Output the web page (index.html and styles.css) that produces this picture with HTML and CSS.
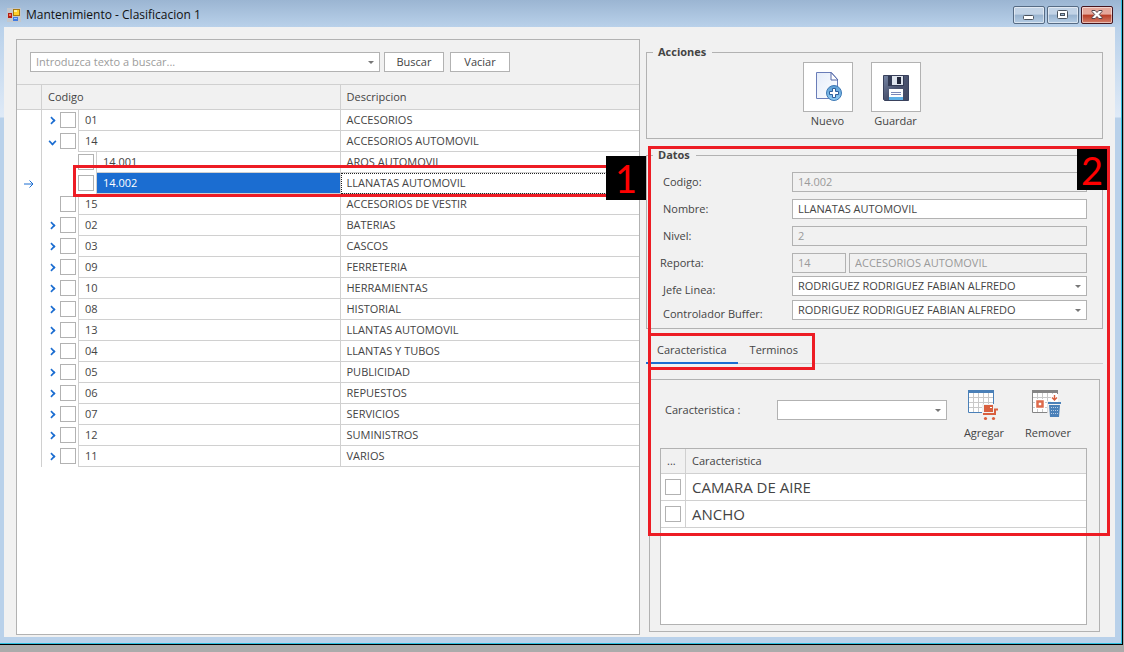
FILE: index.html
```html
<!DOCTYPE html>
<html lang="es">
<head>
<meta charset="utf-8">
<title>Mantenimiento - Clasificacion 1</title>
<link rel="stylesheet" href="styles.css">
</head>
<body>
<div class="window">
  <header class="titlebar">
    <svg class="app-icon" width="14" height="14" viewBox="0 0 14 14" aria-hidden="true">
      <rect width="14" height="14" fill="#c3c7cc"/>
      <rect x="6.500" y="1.500" width="6" height="6" fill="#ffd028" stroke="#a87a10"/>
      <rect x="7" y="2" width="3" height="2" fill="#ffee9a"/>
      <rect x="1" y="5" width="4" height="5" fill="#b51d12"/>
      <rect x="2" y="6" width="2" height="2" fill="#ec7a62"/>
      <rect x="6" y="9" width="5" height="4" fill="#3f7be0"/>
      <rect x="7" y="10" width="3" height="1" fill="#9cc4ff"/>
    </svg>
    <h1 class="title">Mantenimiento - Clasificacion 1</h1>
    <div class="controls">
      <button class="control" type="button" aria-label="Minimizar"><svg width="12" height="12" viewBox="0 0 12 12"><rect x=".5" y="6.500" width="10" height="4" rx="1" fill="#fff" stroke="#4b535e"/></svg></button>
      <button class="control" type="button" aria-label="Maximizar"><svg width="12" height="12" viewBox="0 0 12 12"><rect x=".5" y="1.500" width="10" height="8" rx="1" fill="#fff" stroke="#4b535e"/><rect x="3.500" y="4.500" width="4" height="2" fill="#9db8d3" stroke="#4b535e"/></svg></button>
      <button class="control control-close" type="button" aria-label="Cerrar"><svg width="12" height="12" viewBox="0 0 12 12"><path d="M1 1.500h3.200l1.800 2 1.800-2H11v1L8.300 5.500 11 8.500v1H7.800L6 7.500l-1.800 2H1v-1l2.700-3L1 2.500z" fill="#fff" stroke="#54434a"/></svg></button>
    </div>
  </header>

  <main class="content">
    <section class="panel tree-panel">
      <form class="search">
        <span class="combo search-combo"><input class="field" type="text" aria-label="Buscar" placeholder="Introduzca texto a buscar..."></span>
        <button class="button" type="button">Buscar</button>
        <button class="button button-second" type="button">Vaciar</button>
      </form>
      <table class="tree">
        <colgroup><col class="col-mark"><col><col></colgroup>
        <thead><tr><th></th><th>Codigo</th><th>Descripcion</th></tr></thead>
        <tbody>
          <tr><td></td><td><div class="node"><button class="toggle" type="button" aria-label="Expandir 01"></button><input class="check" type="checkbox" aria-label="01"><span class="code">01</span></div></td><td>ACCESORIOS</td></tr>
          <tr><td></td><td><div class="node"><button class="toggle open" type="button" aria-label="Contraer 14"></button><input class="check" type="checkbox" aria-label="14"><span class="code">14</span></div></td><td>ACCESORIOS AUTOMOVIL</td></tr>
          <tr><td></td><td><div class="node child"><input class="check" type="checkbox" aria-label="14.001"><span class="code">14.001</span></div></td><td>AROS AUTOMOVIL</td></tr>
          <tr class="selected"><td><svg class="row-arrow" width="10" height="10" viewBox="0 0 10 10"><path d="M0 5h9M5.500 1.500L9 5 5.500 8.500" fill="none" stroke="#1b6dd1"/></svg></td><td><div class="node child"><input class="check" type="checkbox" aria-label="14.002"><span class="code">14.002</span></div></td><td>LLANATAS AUTOMOVIL</td></tr>
          <tr><td></td><td><div class="node leaf"><input class="check" type="checkbox" aria-label="15"><span class="code">15</span></div></td><td>ACCESORIOS DE VESTIR</td></tr>
          <tr><td></td><td><div class="node"><button class="toggle" type="button" aria-label="Expandir 02"></button><input class="check" type="checkbox" aria-label="02"><span class="code">02</span></div></td><td>BATERIAS</td></tr>
          <tr><td></td><td><div class="node"><button class="toggle" type="button" aria-label="Expandir 03"></button><input class="check" type="checkbox" aria-label="03"><span class="code">03</span></div></td><td>CASCOS</td></tr>
          <tr><td></td><td><div class="node"><button class="toggle" type="button" aria-label="Expandir 09"></button><input class="check" type="checkbox" aria-label="09"><span class="code">09</span></div></td><td>FERRETERIA</td></tr>
          <tr><td></td><td><div class="node"><button class="toggle" type="button" aria-label="Expandir 10"></button><input class="check" type="checkbox" aria-label="10"><span class="code">10</span></div></td><td>HERRAMIENTAS</td></tr>
          <tr><td></td><td><div class="node"><button class="toggle" type="button" aria-label="Expandir 08"></button><input class="check" type="checkbox" aria-label="08"><span class="code">08</span></div></td><td>HISTORIAL</td></tr>
          <tr><td></td><td><div class="node"><button class="toggle" type="button" aria-label="Expandir 13"></button><input class="check" type="checkbox" aria-label="13"><span class="code">13</span></div></td><td>LLANTAS AUTOMOVIL</td></tr>
          <tr><td></td><td><div class="node"><button class="toggle" type="button" aria-label="Expandir 04"></button><input class="check" type="checkbox" aria-label="04"><span class="code">04</span></div></td><td>LLANTAS Y TUBOS</td></tr>
          <tr><td></td><td><div class="node"><button class="toggle" type="button" aria-label="Expandir 05"></button><input class="check" type="checkbox" aria-label="05"><span class="code">05</span></div></td><td>PUBLICIDAD</td></tr>
          <tr><td></td><td><div class="node"><button class="toggle" type="button" aria-label="Expandir 06"></button><input class="check" type="checkbox" aria-label="06"><span class="code">06</span></div></td><td>REPUESTOS</td></tr>
          <tr><td></td><td><div class="node"><button class="toggle" type="button" aria-label="Expandir 07"></button><input class="check" type="checkbox" aria-label="07"><span class="code">07</span></div></td><td>SERVICIOS</td></tr>
          <tr><td></td><td><div class="node"><button class="toggle" type="button" aria-label="Expandir 12"></button><input class="check" type="checkbox" aria-label="12"><span class="code">12</span></div></td><td>SUMINISTROS</td></tr>
          <tr><td></td><td><div class="node"><button class="toggle" type="button" aria-label="Expandir 11"></button><input class="check" type="checkbox" aria-label="11"><span class="code">11</span></div></td><td>VARIOS</td></tr>
        </tbody>
      </table>
      <div class="mark mark-row"></div>
      <div class="tag tag-one">1</div>
    </section>

    <section class="detail">
      <fieldset class="group actions">
        <legend>Acciones</legend>
        <div class="action-list">
          <div class="action">
            <button class="action-button" type="button" aria-labelledby="lbl-nuevo">
              <svg width="32" height="32" viewBox="0 0 32 32">
                <defs>
                  <linearGradient id="page" x1="0" y1="0" x2="1" y2="1"><stop offset="0" stop-color="#e4ecfa"/><stop offset="1" stop-color="#fff"/></linearGradient>
                  <linearGradient id="plus" x1="0" y1="0" x2="0" y2="1"><stop offset="0" stop-color="#5b9bd2"/><stop offset="1" stop-color="#8fcdf4"/></linearGradient>
                </defs>
                <path d="M4.500 1.500h15l6 7v19h-21z" fill="url(#page)" stroke="#6a7db8"/>
                <path d="M19 1.500v7.500h7z" fill="#fff" stroke="#5468a8"/>
                <circle cx="22" cy="22" r="7.500" fill="url(#plus)" stroke="#3d78b5"/>
                <path d="M20.500 17.500h3v3h3v3h-3v3h-3v-3h-3v-3h3z" fill="#fff" stroke="#2c5f9c"/>
              </svg>
            </button>
            <span id="lbl-nuevo">Nuevo</span>
          </div>
          <div class="action">
            <button class="action-button" type="button" aria-labelledby="lbl-guardar">
              <svg width="32" height="32" viewBox="0 0 32 32">
                <defs>
                  <linearGradient id="disk" x1="0" y1="0" x2="1" y2="1"><stop offset="0" stop-color="#7786a5"/><stop offset=".5" stop-color="#4b5470"/><stop offset="1" stop-color="#414861"/></linearGradient>
                </defs>
                <path d="M3.500 4.500h25v25h-24l-1-1z" fill="url(#disk)" stroke="#39415c"/>
                <rect x="8" y="5" width="16" height="10" fill="#323a54"/>
                <rect x="12" y="5" width="11" height="9" fill="#dfe5ee"/>
                <rect x="17" y="6" width="4" height="7" fill="#20263a"/>
                <rect x="9" y="18" width="14" height="11" fill="#fff"/>
                <path d="M11 21.500h10M11 23.500h10" stroke="#7a88b8"/>
                <rect x="9" y="26" width="14" height="3" fill="#5fb0e6"/>
              </svg>
            </button>
            <span id="lbl-guardar">Guardar</span>
          </div>
        </div>
      </fieldset>

      <fieldset class="group data">
        <legend>Datos</legend>
        <div class="form">
          <div class="row"><label for="codigo">Codigo:</label><input class="field" id="codigo" type="text" value="14.002" disabled></div>
          <div class="row"><label for="nombre">Nombre:</label><input class="field" id="nombre" type="text" value="LLANATAS AUTOMOVIL"></div>
          <div class="row"><label for="nivel">Nivel:</label><input class="field" id="nivel" type="text" value="2" disabled></div>
          <div class="row"><label class="flush" for="reporta">Reporta:</label><div class="pair"><input class="field" id="reporta" type="text" value="14" disabled><input class="field" type="text" aria-label="Descripcion de reporta" value="ACCESORIOS AUTOMOVIL" disabled></div></div>
          <div class="row row-combo"><label for="jefe">Jefe Linea:</label><span class="combo"><select class="field" id="jefe"><option>RODRIGUEZ RODRIGUEZ FABIAN ALFREDO</option></select></span></div>
          <div class="row row-combo"><label for="controlador">Controlador Buffer:</label><span class="combo"><select class="field" id="controlador"><option>RODRIGUEZ RODRIGUEZ FABIAN ALFREDO</option></select></span></div>
        </div>
      </fieldset>

      <div class="tabs" role="tablist">
        <button class="tab active" type="button" role="tab" aria-selected="true">Caracteristica</button>
        <button class="tab" type="button" role="tab" aria-selected="false">Terminos</button>
        <div class="mark mark-tabs"></div>
      </div>

      <div class="panel features" role="tabpanel">
        <div class="feature-bar">
          <label for="caracteristica">Caracteristica :</label>
          <span class="combo feature-combo"><select class="field" id="caracteristica"><option></option></select></span>
          <button class="tool" type="button">
            <svg width="32" height="32" viewBox="0 0 32 32">
              <rect width="26" height="23" fill="#fff"/>
              <path d="M5.500 3v19M10.500 3v19M15.500 3v19M20.500 3v19M1 7.500h24M1 12.500h24M1 17.500h24" stroke="#c9c9c9"/>
              <path d="M0 0h26v3H0z" fill="#4a80b8"/>
              <path d="M.5 2v20.500h14M25.500 2v13" fill="none" stroke="#4a80b8"/>
              <path d="M14 14h17v16H14z" fill="#f1f1f1"/>
              <path d="M16 15h9v7h-9z" fill="#d9603f"/>
              <path d="M22 17h2v1h-2z" fill="#fff"/>
              <path d="M15 24h12v-4.500h3" fill="none" stroke="#d9603f" stroke-width="2"/>
              <circle cx="17.500" cy="28.500" r="1.600" fill="#d9603f"/><circle cx="25.500" cy="28.500" r="1.600" fill="#d9603f"/>
            </svg>
            <span>Agregar</span>
          </button>
          <button class="tool" type="button">
            <svg width="32" height="32" viewBox="0 0 32 32">
              <rect width="26" height="23" fill="#fff"/>
              <path d="M5.500 3v19M10.500 3v19M15.500 3v19M20.500 3v19M1 7.500h24M1 12.500h24M1 17.500h24" stroke="#c9c9c9"/>
              <path d="M0 0h26v3H0z" fill="#858585"/>
              <path d="M.5 2v20.500h15M25.500 2v4" fill="none" stroke="#858585"/>
              <path d="M3 9h10v10H3z" fill="#fff"/>
              <path d="M5.500 11.500h5v5h-5z" fill="#fff" stroke="#dd6b4c" stroke-width="2.500"/>
              <path d="M15 11h15v17H16z" fill="#f1f1f1"/>
              <path d="M19 4h7v8h-7z" fill="#fff"/>
              <path d="M22.500 5v5M20 7.500l2.500 2.500L25 7.500" fill="none" stroke="#d9603f" stroke-width="1.400"/>
              <path d="M16 12h13v2H16zM17 15h11l-1 12h-9z" fill="#4a80b8"/>
              <path d="M19 17.500h8M19 20.500h8M19 23.500h8" stroke="#b9cfe6" stroke-dasharray="1 1"/>
            </svg>
            <span>Remover</span>
          </button>
        </div>
        <div class="grid-box">
          <table class="grid">
            <colgroup><col class="col-mark"><col></colgroup>
            <thead><tr><th>...</th><th>Caracteristica</th></tr></thead>
            <tbody>
              <tr><td><input class="check" type="checkbox" aria-label="CAMARA DE AIRE"></td><td>CAMARA DE AIRE</td></tr>
              <tr><td><input class="check" type="checkbox" aria-label="ANCHO"></td><td>ANCHO</td></tr>
            </tbody>
          </table>
        </div>
      </div>
      <div class="mark mark-detail"></div>
      <div class="tag tag-two">2</div>
    </section>
  </main>
</div>
</body>
</html>
```
FILE: styles.css
```css
* { box-sizing: border-box; }

body {
  margin: 0;
  min-height: 100vh;
  display: flex;
  flex-direction: column;
  padding: 0 1px 7px 0;
  background: #ababab;
  color: #444;
  font: 11px/16px "Open Sans", "Noto Sans", sans-serif;
}

button, input, select { font: inherit; color: inherit; margin: 0; }

.window {
  flex: 1;
  display: flex;
  flex-direction: column;
  padding: 0 7px 7px 4px;
  border: solid #000;
  border-width: 0 1px 1px 0;
  box-shadow: inset -1px -1px 0 #2fc0e0;
  background: linear-gradient(#9bb5d2 0, #b9d1ea 27px, #dfeaf7 117px, #b9d1ea 118px);
}

/* Title bar */
.titlebar {
  height: 27px;
  display: flex;
  align-items: center;
  gap: 5px;
  padding: 3px 2px 0 3px;
}
.title { flex: 1; margin: 0; font-size: 12px; font-weight: 400; color: #111; }
.controls { display: flex; gap: 2px; }
.control {
  width: 32px;
  height: 18px;
  padding: 0;
  display: flex;
  align-items: center;
  justify-content: center;
  border: 1px solid #566b84;
  border-radius: 2px;
  box-shadow: inset 0 0 0 1px rgba(255, 255, 255, .5);
  background: linear-gradient(#c2d3e6 0 45%, #98b3cf 50%, #b4cce4);
}
.control-close { border-color: #45151f; background: linear-gradient(#e5a79b 0 45%, #b83c25 50%, #d4806c); }

/* Main areas */
.content {
  flex: 1;
  display: grid;
  grid-template-columns: 624fr 457fr;
  gap: 6px;
  padding: 12px 12px 2px 12px;
  background: #f1f1f1;
}
.panel { border: 1px solid #b2b2b2; }

.tree-panel { position: relative; background: #fff; }
.search {
  display: flex;
  gap: 4px;
  padding: 12px 13px;
  background: #f1f1f1;
  border-bottom: 1px solid #d0d0d0;
}
.search-combo { width: 350px; }
.button {
  width: 60px;
  height: 20px;
  padding: 0;
  border: 1px solid #b2b2b2;
  background: #fff;
}
.button-second { margin-left: 2px; }

.field {
  display: block;
  width: 100%;
  min-width: 0;
  height: 20px;
  padding: 0 5px;
  border: 1px solid #b2b2b2;
  border-radius: 0;
  background: #fff;
  line-height: 16px;
  appearance: none;
}
input.field { padding-bottom: 2px; }
.field:disabled { background: #f1f1f1; color: #9a9a9a; opacity: 1; }
.field::placeholder { color: #9c9c9c; }
.combo { position: relative; display: block; }
.combo::after {
  content: "";
  position: absolute;
  right: 6px;
  top: 9px;
  border: solid transparent;
  border-width: 3px 3px 0;
  border-top-color: #777;
  pointer-events: none;
}

.check {
  flex: none;
  display: block;
  width: 16px;
  height: 16px;
  border: 1px solid #b2b2b2;
  background: #fff;
  appearance: none;
}

table { width: 100%; border-collapse: separate; border-spacing: 0; table-layout: fixed; }
.col-mark { width: 25px; }
th {
  height: 25px;
  padding: 0 6px;
  text-align: left;
  font-weight: 400;
  background: #f1f1f1;
  border: solid #d0d0d0;
  border-width: 0 1px 1px 0;
}
th:last-child { border-right: 0; }

/* Tree */
.tree td { height: 21px; padding: 0; line-height: 20px; }
.tree td:first-child, .tree td:nth-child(2) { border-right: 1px solid #d0d0d0; }
.tree td:last-child { padding-left: 6px; border-bottom: 1px solid #d0d0d0; }
.node { height: 21px; display: flex; align-items: flex-start; }
.node .check { margin: 2px 2px 0 0; }
.leaf { padding-left: 18px; }
.child { padding-left: 36px; }
.code { flex: 1; height: 21px; padding-left: 6px; border: solid #d0d0d0; border-width: 0 0 1px 1px; }
.toggle { width: 18px; height: 21px; padding: 0; border: 0; background: none; }
.toggle::before {
  content: "";
  display: block;
  width: 5px;
  height: 5px;
  margin-left: 6px;
  border: solid #1b6dd1;
  border-width: 2px 2px 0 0;
  transform: rotate(45deg) scale(.8);
}
.toggle.open::before { margin-left: 7px; transform: rotate(135deg) scale(.8); }
.row-arrow { display: block; margin-left: 7px; }
.selected .code { background: #1b6dd1; color: #fff; }
.selected td:last-child { outline: 1px dotted #222; outline-offset: -1px; }

/* Detail */
.detail { position: relative; display: flex; flex-direction: column; padding: 5px 0 3px; }
.group { margin: 0; padding: 0 6px; min-width: 0; border: 1px solid #b2b2b2; }
.group legend { padding: 0 6px 0 5px; font-weight: 700; font-size: 11px; line-height: 16px; }
.actions { padding-bottom: 9px; }
.action-list { display: flex; justify-content: center; gap: 18px; padding: 2px 26px 0 0; }
.action { width: 50px; display: flex; flex-direction: column; align-items: center; gap: 1px; }
.action-button {
  width: 50px;
  height: 50px;
  padding: 0;
  display: flex;
  align-items: center;
  justify-content: center;
  border: 1px solid #b2b2b2;
  background: #fff;
}

.data { margin-top: 8px; }
.form { display: flex; flex-direction: column; gap: 7px; padding: 9px 9px 8px 7px; }
.row { display: grid; grid-template-columns: 132px 1fr; align-items: center; }
.row label { padding-left: 3px; }
.row .flush { padding-left: 0; }
.row-combo { height: 20px; margin-top: -3px; align-items: start; }
.row-combo:nth-child(5) { margin-top: -4px; }
.row-combo label { padding-top: 6px; }
.pair { display: grid; grid-template-columns: 54px 1fr; gap: 3px; }

.tabs { position: relative; display: flex; margin-top: 8px; border-bottom: 1px solid #d0d0d0; }
.tab { height: 27px; margin-bottom: -1px; padding: 0 12px; border: 0; border-bottom: 2px solid transparent; background: none; }
.tab.active { padding: 0 11px; border-bottom-color: #1b6dd1; }

.features { flex: 1; display: flex; flex-direction: column; margin: 15px 3px 0; padding: 10px 12px 6px 10px; }
.feature-bar { display: flex; align-items: flex-start; padding-left: 5px; }
.feature-bar label { width: 112px; padding-top: 12px; }
.feature-combo { width: 170px; margin: 10px 5px 0 0; }
.tool {
  width: 64px;
  padding: 0 0 7px;
  display: flex;
  flex-direction: column;
  align-items: center;
  gap: 3px;
  border: 0;
  background: none;
}
.grid-box { flex: 1; border: 1px solid #b2b2b2; background: #fff; }
.grid td { height: 27px; padding: 0 6px; font-size: 15px; line-height: 20px; border: solid #d0d0d0; border-width: 0 0 1px; }
.grid td:first-child { padding: 0 4px; border-right-width: 1px; }

/* Callouts */
.mark { position: absolute; border: 3px solid #ed1c24; pointer-events: none; }
.mark-row { left: 56px; right: 30px; top: 125px; height: 32px; }
.mark-tabs { left: 2px; top: -4px; width: 167px; height: 37px; }
.mark-detail { left: 2px; right: -7px; top: 107px; bottom: 99px; }
.tag {
  position: absolute;
  display: flex;
  align-items: center;
  justify-content: center;
  background: #000;
  color: #f00;
  font: 38px/40px Lato, sans-serif;
}
.tag-one { right: -7px; top: 116px; width: 40px; height: 44px; z-index: 1; }
.tag-two { right: -4px; top: 110px; width: 30px; height: 41px; }
```
